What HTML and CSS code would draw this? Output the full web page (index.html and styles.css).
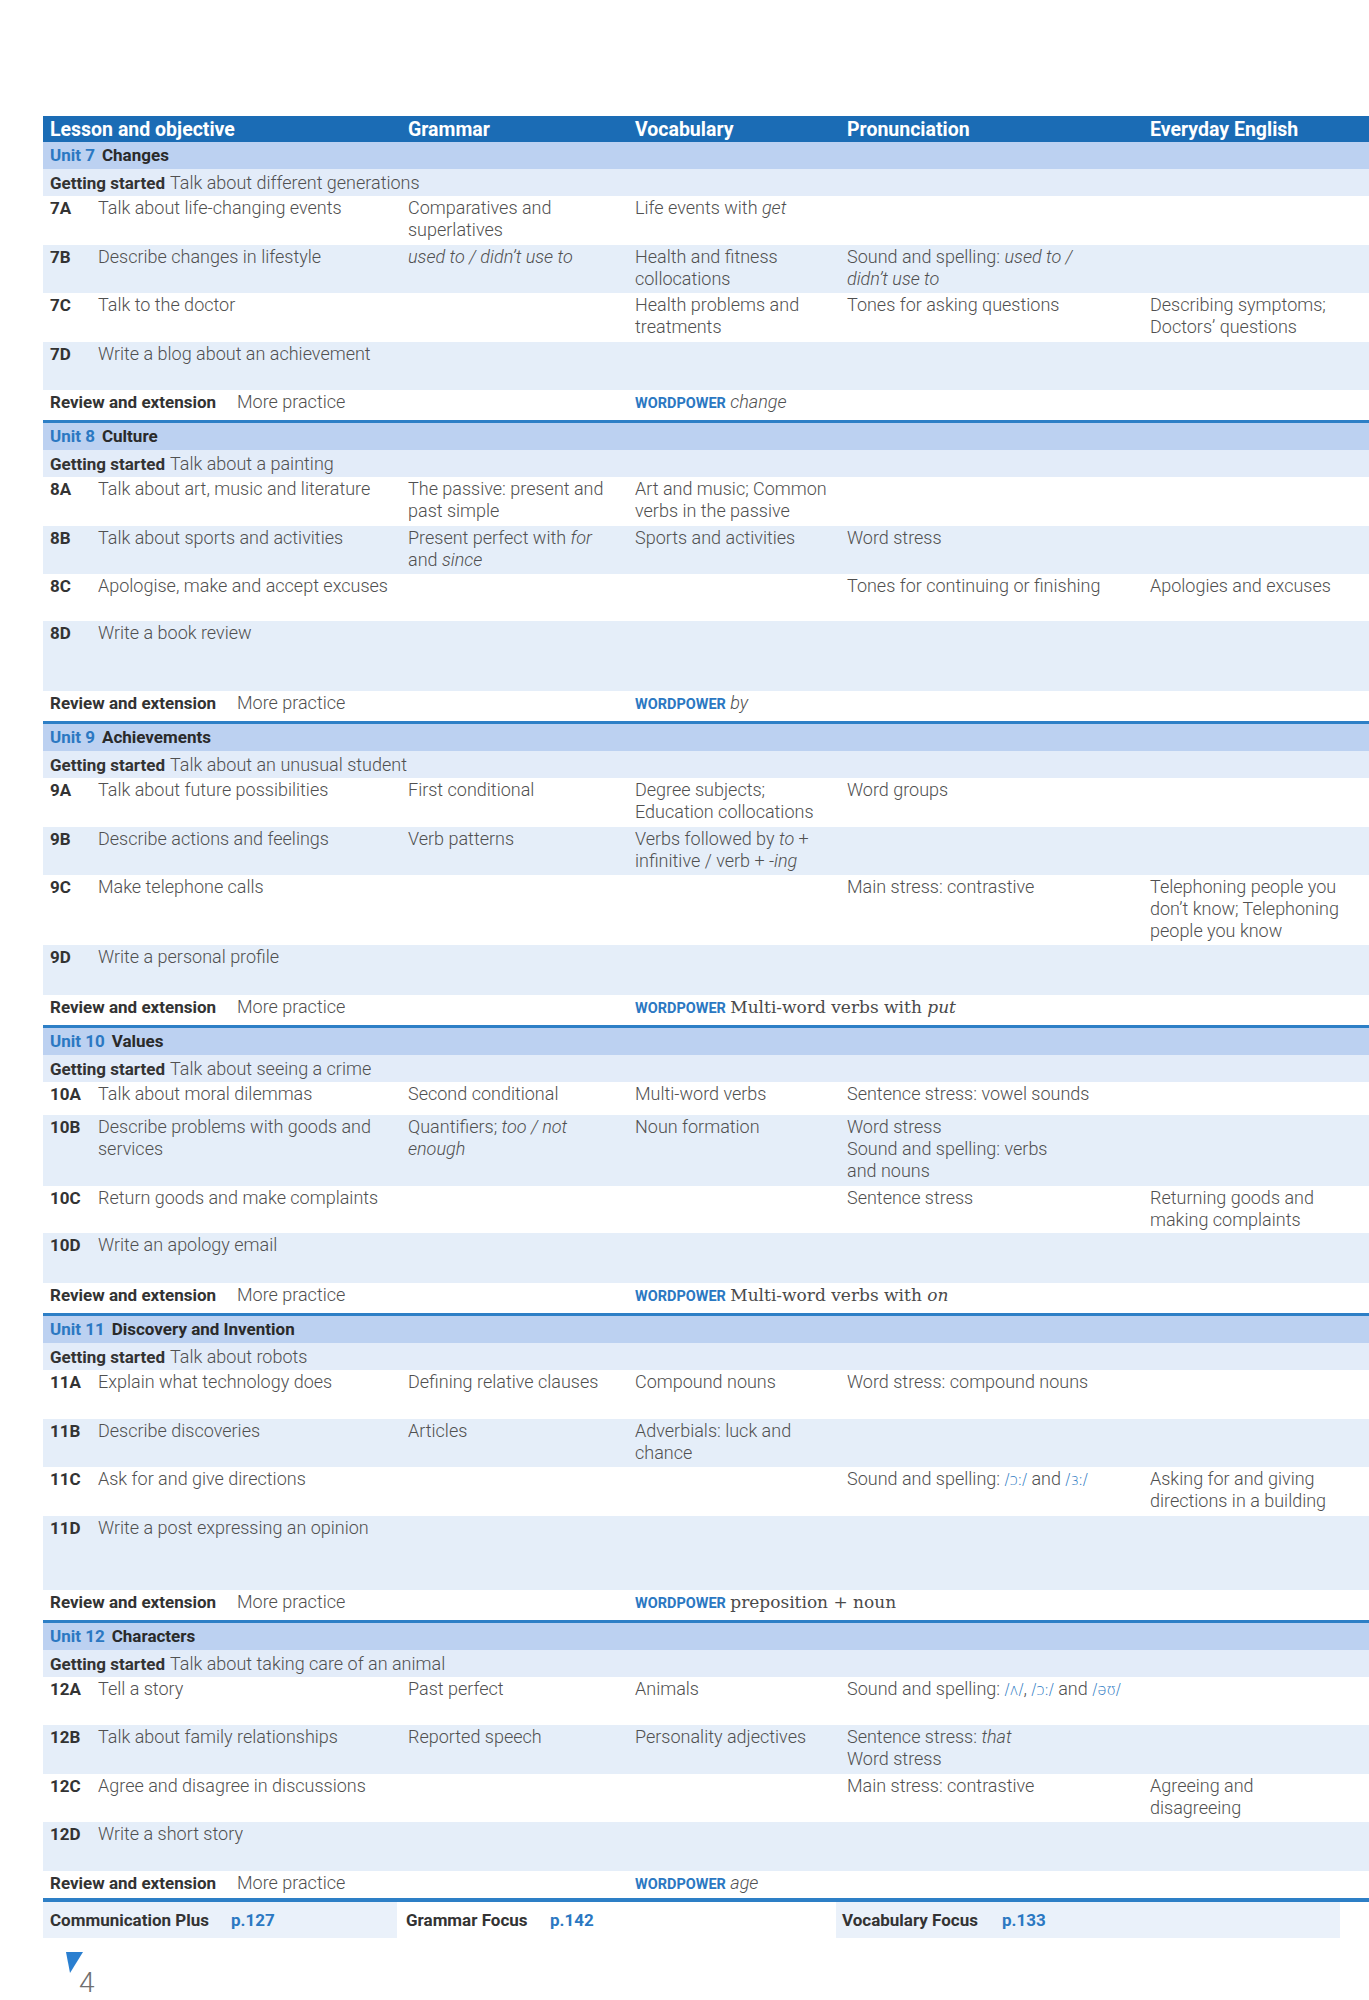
FILE: index.html
```html
<!DOCTYPE html>
<html lang="en">
<head>
<meta charset="utf-8">
<title>Contents</title>
<link rel="stylesheet" href="styles.css">
</head>
<body>
<div class="toc">
  <div class="hdr">
    <span class="first">Lesson and objective</span>
    <span>Grammar</span>
    <span>Vocabulary</span>
    <span>Pronunciation</span>
    <span>Everyday English</span>
  </div>

  <!-- Unit 7 -->
  <div class="unit"><span class="num">Unit 7</span>Changes</div>
  <div class="gs"><span class="gsl">Getting started</span>Talk about different generations</div>
  <div class="row">
    <span class="code">7A</span><span>Talk about life-changing events</span><span>Comparatives and<br>superlatives</span><span>Life events with <i>get</i></span><span></span><span></span>
  </div>
  <div class="row band">
    <span class="code">7B</span><span>Describe changes in lifestyle</span><span><i>used to / didn’t use to</i></span><span>Health and fitness<br>collocations</span><span>Sound and spelling: <i>used to /</i><br><i>didn’t use to</i></span><span></span>
  </div>
  <div class="row">
    <span class="code">7C</span><span>Talk to the doctor</span><span></span><span>Health problems and<br>treatments</span><span>Tones for asking questions</span><span>Describing symptoms;<br>Doctors’ questions</span>
  </div>
  <div class="row band">
    <span class="code">7D</span><span>Write a blog about an achievement</span>
  </div>
  <div class="rev">
    <span class="revl"><span class="revt">Review and extension</span>More practice</span><span class="wp"><span class="wpl">WORDPOWER</span> <i>change</i></span>
  </div>

  <!-- Unit 8 -->
  <div class="unit"><span class="num">Unit 8</span>Culture</div>
  <div class="gs"><span class="gsl">Getting started</span>Talk about a painting</div>
  <div class="row">
    <span class="code">8A</span><span>Talk about art, music and literature</span><span>The passive: present and<br>past simple</span><span>Art and music; Common<br>verbs in the passive</span><span></span><span></span>
  </div>
  <div class="row band">
    <span class="code">8B</span><span>Talk about sports and activities</span><span>Present perfect with <i>for</i><br>and <i>since</i></span><span>Sports and activities</span><span>Word stress</span><span></span>
  </div>
  <div class="row h47">
    <span class="code">8C</span><span>Apologise, make and accept excuses</span><span></span><span></span><span>Tones for continuing or finishing</span><span>Apologies and excuses</span>
  </div>
  <div class="row band h70">
    <span class="code">8D</span><span>Write a book review</span>
  </div>
  <div class="rev">
    <span class="revl"><span class="revt">Review and extension</span>More practice</span><span class="wp"><span class="wpl">WORDPOWER</span> <i>by</i></span>
  </div>

  <!-- Unit 9 -->
  <div class="unit"><span class="num">Unit 9</span>Achievements</div>
  <div class="gs"><span class="gsl">Getting started</span>Talk about an unusual student</div>
  <div class="row">
    <span class="code">9A</span><span>Talk about future possibilities</span><span>First conditional</span><span>Degree subjects;<br>Education collocations</span><span>Word groups</span><span></span>
  </div>
  <div class="row band">
    <span class="code">9B</span><span>Describe actions and feelings</span><span>Verb patterns</span><span>Verbs followed by <i>to</i> +<br>infinitive / verb + <i>-ing</i></span><span></span><span></span>
  </div>
  <div class="row h70">
    <span class="code">9C</span><span>Make telephone calls</span><span></span><span></span><span>Main stress: contrastive</span><span>Telephoning people you<br>don’t know; Telephoning<br>people you know</span>
  </div>
  <div class="row band h50">
    <span class="code">9D</span><span>Write a personal profile</span>
  </div>
  <div class="rev">
    <span class="revl"><span class="revt">Review and extension</span>More practice</span><span class="wp"><span class="wpl">WORDPOWER</span> <span class="serif">Multi-word verbs with <i>put</i></span></span>
  </div>

  <!-- Unit 10 -->
  <div class="unit"><span class="num">Unit 10</span>Values</div>
  <div class="gs"><span class="gsl">Getting started</span>Talk about seeing a crime</div>
  <div class="row h33">
    <span class="code">10A</span><span>Talk about moral dilemmas</span><span>Second conditional</span><span>Multi-word verbs</span><span>Sentence stress: vowel sounds</span><span></span>
  </div>
  <div class="row band h71">
    <span class="code">10B</span><span>Describe problems with goods and<br>services</span><span>Quantifiers; <i>too / not<br>enough</i></span><span>Noun formation</span><span>Word stress<br>Sound and spelling: verbs<br>and nouns</span><span></span>
  </div>
  <div class="row h47">
    <span class="code">10C</span><span>Return goods and make complaints</span><span></span><span></span><span>Sentence stress</span><span>Returning goods and<br>making complaints</span>
  </div>
  <div class="row band h50">
    <span class="code">10D</span><span>Write an apology email</span>
  </div>
  <div class="rev">
    <span class="revl"><span class="revt">Review and extension</span>More practice</span><span class="wp"><span class="wpl">WORDPOWER</span> <span class="serif">Multi-word verbs with <i>on</i></span></span>
  </div>

  <!-- Unit 11 -->
  <div class="unit"><span class="num">Unit 11</span>Discovery and Invention</div>
  <div class="gs"><span class="gsl">Getting started</span>Talk about robots</div>
  <div class="row">
    <span class="code">11A</span><span>Explain what technology does</span><span>Defining relative clauses</span><span>Compound nouns</span><span>Word stress: compound nouns</span><span></span>
  </div>
  <div class="row band">
    <span class="code">11B</span><span>Describe discoveries</span><span>Articles</span><span>Adverbials: luck and<br>chance</span><span></span><span></span>
  </div>
  <div class="row">
    <span class="code">11C</span><span>Ask for and give directions</span><span></span><span></span><span>Sound and spelling: <span class="ipa">/ɔː/</span> and <span class="ipa">/ɜː/</span></span><span>Asking for and giving<br>directions in a building</span>
  </div>
  <div class="row band h74">
    <span class="code">11D</span><span>Write a post expressing an opinion</span>
  </div>
  <div class="rev">
    <span class="revl"><span class="revt">Review and extension</span>More practice</span><span class="wp"><span class="wpl">WORDPOWER</span> <span class="serif">preposition + noun</span></span>
  </div>

  <!-- Unit 12 -->
  <div class="unit"><span class="num">Unit 12</span>Characters</div>
  <div class="gs"><span class="gsl">Getting started</span>Talk about taking care of an animal</div>
  <div class="row">
    <span class="code">12A</span><span>Tell a story</span><span>Past perfect</span><span>Animals</span><span>Sound and spelling: <span class="ipa">/ʌ/</span>, <span class="ipa">/ɔː/</span> and <span class="ipa">/əʊ/</span></span><span></span>
  </div>
  <div class="row band">
    <span class="code">12B</span><span>Talk about family relationships</span><span>Reported speech</span><span>Personality adjectives</span><span>Sentence stress: <i>that</i><br>Word stress</span><span></span>
  </div>
  <div class="row">
    <span class="code">12C</span><span>Agree and disagree in discussions</span><span></span><span></span><span>Main stress: contrastive</span><span>Agreeing and<br>disagreeing</span>
  </div>
  <div class="row band">
    <span class="code">12D</span><span>Write a short story</span>
  </div>
  <div class="rev last">
    <span class="revl"><span class="revt">Review and extension</span>More practice</span><span class="wp"><span class="wpl">WORDPOWER</span> <i>age</i></span>
  </div>

  <div class="foot">
    <div class="fcell tint"><span class="fl w1">Communication Plus</span><span class="fp">p.127</span></div>
    <div class="fcell plain"><span class="fl w2">Grammar Focus</span><span class="fp">p.142</span></div>
    <div class="fcell tint third"><span class="fl w3">Vocabulary Focus</span><span class="fp">p.133</span></div>
  </div>
</div>

<div class="folio">
  <svg class="tri" width="17" height="21" viewBox="0 0 17 21"><polygon points="0,0 17,0 4,21" fill="#2a7fd0"/></svg>
  <span class="pnum">4</span>
</div>
</body>
</html>
```

FILE: styles.css
```css
:root {
  --cond: "Roboto", "Liberation Sans", sans-serif;
  --blue: #1b6cb5;
  --link: #2b78c2;
  --unit: #bcd1f1;
  --band: #e5eef9;
  --line: #2d7fc6;
}

html, body {
  margin: 0;
  padding: 0;
  background: #ffffff;
}

body {
  font-family: "Roboto", "Liberation Sans", sans-serif;
  font-weight: 300;
  font-size: 18px;
  line-height: 22px;
  color: #505050;
}

.toc {
  margin: 116px 0 0 43px;
  width: 1326px;
}

.hdr {
  display: grid;
  grid-template-columns: 365px 227px 212px 303px 1fr;
  height: 26px;
  background: var(--blue);
  color: #ffffff;
  font-family: var(--cond);
  font-weight: 700;
  font-size: 19.5px;
  line-height: 27px;
  white-space: nowrap;
}

.hdr .first {
  padding-left: 7px;
}

.unit {
  height: 27px;
  background: var(--unit);
  padding-left: 7px;
  font-family: var(--cond);
  font-weight: 700;
  font-size: 17px;
  line-height: 27px;
  color: #2a2a2a;
  white-space: nowrap;
}

.unit .num {
  color: var(--link);
  margin-right: 7px;
}

.gs {
  height: 27px;
  background: #e3ecf9;
  padding-left: 7px;
  line-height: 27px;
  white-space: nowrap;
}

.gsl {
  display: inline-block;
  width: 120px;
  font-family: var(--cond);
  font-weight: 700;
  font-size: 17px;
  color: #333333;
}

.row {
  display: grid;
  grid-template-columns: 55px 310px 227px 212px 303px 1fr;
  min-height: 48.5px;
  padding-top: 1px;
  box-sizing: border-box;
}

.row.band {
  background: var(--band);
}

.row.h33 { min-height: 33px; }
.row.h47 { min-height: 47px; }
.row.h50 { min-height: 50px; }
.row.h70 { min-height: 70px; }
.row.h71 { min-height: 71px; }
.row.h74 { min-height: 74px; }

.code {
  padding-left: 7px;
  font-family: var(--cond);
  font-weight: 700;
  font-size: 17px;
  color: #333333;
}

.row > span:nth-child(2) {
  white-space: nowrap;
}

.rev {
  display: grid;
  grid-template-columns: 592px 1fr;
  height: 33px;
  padding-top: 1px;
  box-sizing: border-box;
  border-bottom: 3px solid var(--line);
  white-space: nowrap;
}

.rev.last {
  height: 31px;
  border-bottom-width: 4px;
}

.revl {
  padding-left: 7px;
}

.revt {
  display: inline-block;
  width: 187px;
  font-family: var(--cond);
  font-weight: 700;
  font-size: 17px;
  color: #333333;
}

.wpl {
  font-family: var(--cond);
  font-weight: 700;
  font-size: 14.5px;
  color: var(--link);
}

.serif {
  font-family: "DejaVu Serif", "Liberation Serif", serif;
  font-weight: 400;
  font-size: 17px;
  color: #4a4a4a;
}

.ipa {
  color: var(--link);
  font-family: "DejaVu Sans", "Roboto", sans-serif;
  font-size: 15px;
}

.foot {
  display: grid;
  grid-template-columns: 354px 439px 504px;
  height: 35px;
  line-height: 35px;
  white-space: nowrap;
}

.fcell.tint {
  background: #eaf1fa;
  padding-left: 7px;
}

.fcell.plain {
  padding-left: 9px;
}

.fcell.third {
  padding-left: 6px;
}

.fl {
  display: inline-block;
  font-family: var(--cond);
  font-weight: 700;
  font-size: 17px;
  color: #333333;
}

.w1 { width: 181px; }
.w2 { width: 144px; }
.w3 { width: 160px; }

.fp {
  font-family: var(--cond);
  font-weight: 700;
  font-size: 17px;
  color: var(--link);
}

.folio {
  display: flex;
  align-items: flex-start;
  margin: 15px 0 0 66px;
  height: 42px;
}

.tri {
  display: block;
}

.pnum {
  margin: 17px 0 0 -4px;
  font-family: "Roboto", sans-serif;
  font-weight: 300;
  font-size: 28px;
  line-height: 28px;
  color: #6f6f6f;
}
```
